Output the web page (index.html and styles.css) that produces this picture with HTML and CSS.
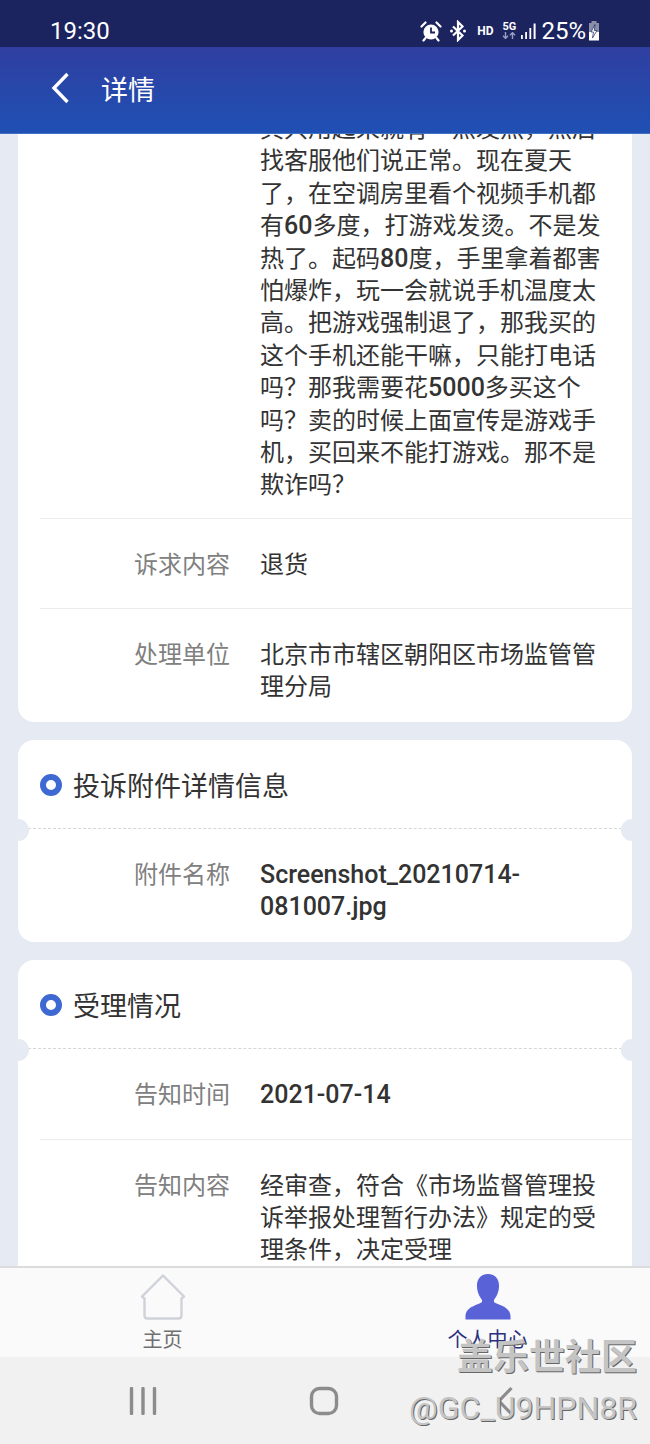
FILE: index.html
```html
<!DOCTYPE html>
<html lang="zh-CN">
<head>
    <meta charset="UTF-8">
    <meta name="viewport" content="width=device-width, initial-scale=1.0">
    <title>详情</title>
    <link rel="stylesheet" href="styles.css">
</head>
<body>
    <div class="phone">
        <div class="status-bar">
            <span class="clock">19:30</span>
            <div class="status-icons">
                <svg class="ic-alarm" width="22" height="22" viewBox="0 0 22 22">
                    <circle cx="11" cy="12" r="7.6" fill="#fff"/>
                    <path d="M11 7.5V12.5H15" fill="none" stroke="#1c2460" stroke-width="1.8"/>
                    <path d="M1.5 6.5L5.5 2.5M20.5 6.5L16.5 2.5M5.5 18L3.5 20.5M16.5 18L18.5 20.5" stroke="#fff" stroke-width="2.2" stroke-linecap="round"/>
                </svg>
                <svg class="ic-bt" width="18" height="22" viewBox="0 0 18 22">
                    <path d="M4 6.5L13.5 15.5L9 20V2L13.5 6.5L4 15.5" fill="none" stroke="#fff" stroke-width="2.2"/>
                    <circle cx="2.5" cy="11" r="1.5" fill="#fff"/>
                    <circle cx="15.5" cy="11" r="1.5" fill="#fff"/>
                </svg>
                <span class="hd">HD</span>
                <div class="net">
                    <span class="net-label">5G</span>
                    <svg width="14" height="7" viewBox="0 0 14 7">
                        <path d="M3.5 0V6M1 3.8L3.5 6.4L6 3.8" fill="none" stroke="#9aa0c0" stroke-width="1.4"/>
                        <path d="M10.5 7V1M8 3.2L10.5 .6L13 3.2" fill="none" stroke="#9aa0c0" stroke-width="1.4"/>
                    </svg>
                </div>
                <svg class="ic-signal" width="18" height="18" viewBox="0 0 18 18">
                    <path d="M1 13H2.800V17H1ZM5.200 10H7V17H5.200ZM9.400 6H11.200V17H9.400ZM13.600 1.500H15.600V17H13.600Z" fill="#fff"/>
                </svg>
                <span class="battery-text">25%</span>
                <svg class="ic-battery" width="12" height="20" viewBox="0 0 12 20">
                    <path d="M3.5 0H8.5V2H3.5Z" fill="#8a8fa8"/>
                    <path d="M1 2H11V11H1Z" fill="#8a8fa8"/>
                    <path d="M1 11H11V19.5H1Z" fill="#fff"/>
                    <path d="M7 3.5L3 11H5.5L4.5 17L9 9.5H6.3Z" fill="#fff" stroke="#1c2460" stroke-width=".7"/>
                </svg>
            </div>
        </div>

        <div class="title-bar">
            <svg class="back" width="20" height="32" viewBox="0 0 20 32">
                <path d="M17.500 2L4 16L17.500 30" fill="none" stroke="#fff" stroke-width="3.4"/>
            </svg>
            <span class="title">详情</span>
        </div>

        <div class="content">
            <div class="card card-first">
                <div class="row row-long">
                    <div class="label"></div>
                    <div class="value">其只用起来就有一点发热，然后找客服他们说正常。现在夏天了，在空调房里看个视频手机都有<b>60</b>多度，打游戏发烫。不是发热了。起码<b>80</b>度，手里拿着都害怕爆炸，玩一会就说手机温度太高。把游戏强制退了，那我买的这个手机还能干嘛，只能打电话吗？那我需要花<b>5000</b>多买这个吗？卖的时候上面宣传是游戏手机，买回来不能打游戏。那不是欺诈吗？</div>
                </div>
                <div class="row">
                    <div class="label">诉求内容</div>
                    <div class="value">退货</div>
                </div>
                <div class="row">
                    <div class="label">处理单位</div>
                    <div class="value">北京市市辖区朝阳区市场监管管理分局</div>
                </div>
            </div>

            <div class="card">
                <div class="card-head">
                    <span class="dot"></span>
                    <span class="card-title">投诉附件详情信息</span>
                </div>
                <div class="row">
                    <div class="label">附件名称</div>
                    <div class="value strong">Screenshot_20210714-081007.jpg</div>
                </div>
            </div>

            <div class="card">
                <div class="card-head">
                    <span class="dot"></span>
                    <span class="card-title">受理情况</span>
                </div>
                <div class="row">
                    <div class="label">告知时间</div>
                    <div class="value strong">2021-07-14</div>
                </div>
                <div class="row">
                    <div class="label">告知内容</div>
                    <div class="value">经审查，符合《市场监督管理投诉举报处理暂行办法》规定的受理条件，决定受理</div>
                </div>
            </div>
        </div>

        <div class="tabs">
            <div class="tab">
                <svg width="46" height="46" viewBox="0 0 46 46">
                    <path d="M23 1.500L44 22.500L41.500 24.500V41.500Q41.500 44.500 38.500 44.500H7.500Q4.500 44.500 4.500 41.500V24.500L2 22.500Z" fill="none" stroke="#d0d2da" stroke-width="2.400" stroke-linejoin="round"/>
                </svg>
                <span class="tab-label">主页</span>
            </div>
            <div class="tab">
                <svg width="46" height="46" viewBox="0 0 46 46">
                    <path d="M23 0C31 0 34.500 6 34 13C33.600 19 31 23 29 26V28C32 31 45 32 45.500 42V45.500H.5V42C1 32 14 31 17 28V26C15 23 12.400 19 12 13C11.500 6 15 0 23 0Z" fill="#5a62d8"/>
                </svg>
                <span class="tab-label tab-label-on">个人中心</span>
            </div>
        </div>

        <div class="nav-bar">
            <div class="nav-item">
                <svg width="28" height="28" viewBox="0 0 28 28">
                    <path d="M2.500 1.500V26.500M14 1.500V26.500M25.500 1.500V26.500" stroke="#8c8c8c" stroke-width="3.400" stroke-linecap="round"/>
                </svg>
            </div>
            <div class="nav-item">
                <svg width="30" height="30" viewBox="0 0 30 30">
                    <rect x="2.500" y="2.500" width="25" height="25" rx="8" fill="none" stroke="#8c8c8c" stroke-width="3.400"/>
                </svg>
            </div>
            <div class="nav-item">
                <svg width="18" height="30" viewBox="0 0 18 30">
                    <path d="M15.500 2L3 15L15.500 28" fill="none" stroke="#8c8c8c" stroke-width="3.200"/>
                </svg>
            </div>
        </div>

        <div class="watermark">
            <div class="wm-top">盖乐世社区</div>
            <div class="wm-bottom">@GC_U9HPN8R</div>
        </div>
    </div>
</body>
</html>
```

FILE: styles.css
```css
* {
    box-sizing: border-box;
}

html, body {
    margin: 0;
    padding: 0;
}

body {
    font-family: Roboto, "Noto Sans CJK SC", sans-serif;
    background-color: #e6eaf2;
}

.phone {
    position: relative;
    width: 650px;
    height: 1444px;
    display: flex;
    flex-direction: column;
    overflow: hidden;
    background-color: #e6eaf2;
}

.status-bar {
    height: 47px;
    flex: none;
    background-color: #1c2460;
    color: white;
    display: flex;
    align-items: center;
    justify-content: space-between;
    padding: 14px 50px 0 50px;
}

.clock {
    font-size: 24px;
}

.status-icons {
    display: flex;
    align-items: center;
}

.ic-bt {
    margin-left: 7px;
}

.hd {
    font-size: 12px;
    font-weight: 700;
    margin-left: 10px;
}

.net {
    display: flex;
    flex-direction: column;
    align-items: center;
    margin-left: 9px;
}

.net-label {
    font-size: 11px;
    font-weight: 700;
    line-height: 10px;
}

.ic-signal {
    margin-left: 4px;
}

.battery-text {
    font-size: 24px;
    margin-left: 3px;
}

.ic-battery {
    margin-left: 2px;
}

.title-bar {
    height: 87px;
    flex: none;
    background: linear-gradient(180deg, #2f3fa0 0%, #1f50b4 100%);
    border-bottom: 1px solid #3f72c4;
    display: flex;
    align-items: center;
    padding: 0 0 4px 50px;
    color: white;
    position: relative;
    z-index: 1;
}

.title {
    font-size: 27px;
    margin-left: 31px;
}

.content {
    flex: 1;
    min-height: 0;
    overflow: hidden;
    padding: 0 18px;
    display: flex;
    flex-direction: column;
    gap: 18px;
}

.card {
    flex: none;
    background-color: white;
    border-radius: 16px;
}

.card-first {
    border-radius: 0 0 16px 16px;
    margin-top: -51px;
}

.card-head {
    position: relative;
    height: 89px;
    display: flex;
    align-items: center;
    padding: 2px 0 0 22px;
    border-bottom: 1px dashed #d4d6dc;
}

.card-head::before,
.card-head::after {
    content: "";
    position: absolute;
    bottom: -13px;
    width: 22px;
    height: 22px;
    border-radius: 50%;
    background-color: #e6eaf2;
}

.card-head::before {
    left: -11px;
}

.card-head::after {
    right: -11px;
}

.dot {
    width: 22px;
    height: 22px;
    border-radius: 50%;
    border: 6px solid #3f69d2;
    background-color: white;
}

.card-title {
    font-size: 27px;
    color: #333;
    margin-left: 11px;
}

.row {
    display: flex;
    min-height: 90px;
    margin-left: 22px;
    padding: 30px 26px 18px 0;
    border-top: 1px solid #ececec;
    font-size: 24px;
    line-height: 32.4px;
}

.row-long {
    padding-bottom: 16px;
}

.card-first .row:first-child,
.card-head + .row {
    border-top: none;
}

.label {
    width: 190px;
    flex: none;
    text-align: right;
    color: #808080;
}

.value {
    margin-left: 30px;
    min-width: 0;
    color: #333;
}

.value b,
.strong {
    font-size: 25px;
    font-weight: 500;
}

.tabs {
    flex: none;
    height: 91px;
    background-color: #fafafa;
    border-top: 2px solid #dcdcdc;
    display: flex;
    padding-top: 6px;
}

.tab {
    flex: 1;
    display: flex;
    flex-direction: column;
    align-items: center;
}

.tab-label {
    font-size: 20px;
    line-height: 26px;
    margin-top: 7px;
    color: #707070;
}

.tab-label-on {
    color: #2a2f80;
}

.nav-bar {
    flex: none;
    height: 87px;
    background-color: #f1f1f1;
    display: flex;
    align-items: center;
    justify-content: center;
    padding-right: 2px;
}

.nav-item {
    width: 181px;
    display: flex;
    justify-content: center;
}

.watermark {
    position: absolute;
    right: 13px;
    bottom: 16px;
    text-align: right;
    color: #c4c4c4;
    text-shadow: 1px 1px 0 #666;
}

.wm-top {
    font-size: 36px;
    line-height: 44px;
    font-weight: 700;
}

.wm-bottom {
    font-size: 32px;
    line-height: 40px;
    margin-top: 8px;
}
```
